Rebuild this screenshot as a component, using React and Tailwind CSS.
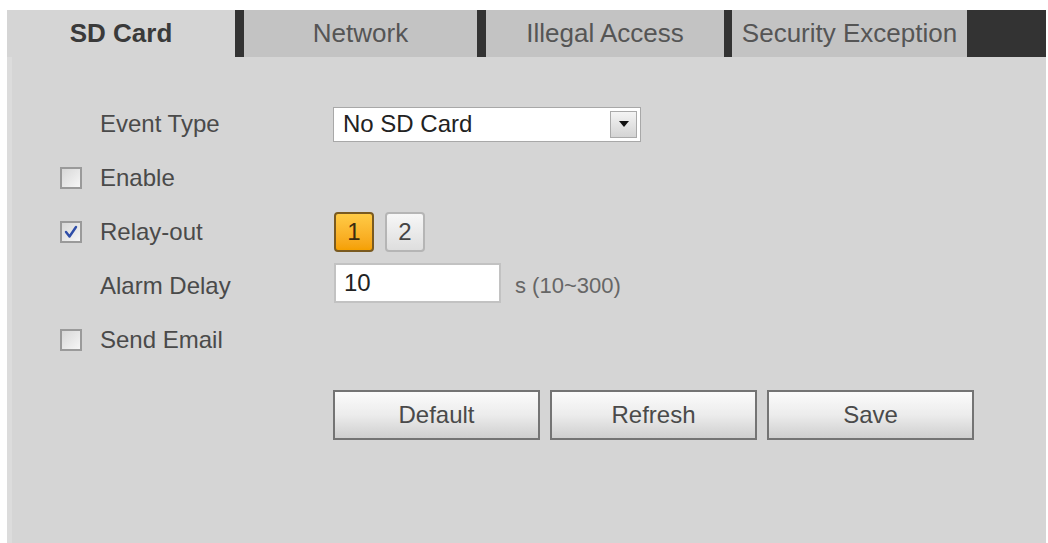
const tabs = [
  { name: 'SD Card', width: 'w-[228px]', active: true },
  { name: 'Network', width: 'w-[233px]' },
  { name: 'Illegal Access', width: 'w-[238px]' },
  { name: 'Security Exception', width: 'w-[235px]' },
];

const font = { fontFamily: '"Liberation Sans", Arial, sans-serif' };

const Checkbox = ({ checked }) => (
  <div className="w-[22px] h-[22px] border-2 border-[#9a9a9a] bg-gradient-to-br from-[#d8d8d8] to-[#f6f6f6] flex items-center justify-center">
    {checked && (
      <svg width="14" height="14" viewBox="0 0 14 14">
        <path d="M2 7 L5.5 11.5 L12 2" fill="none" stroke="#2f4ea8" strokeWidth="2.4" strokeLinecap="round" strokeLinejoin="round" />
      </svg>
    )}
  </div>
);

const Row = ({ check, label, children }) => (
  <div className="flex items-center h-[54px]">
    <div className="w-[93px] pl-[53px] flex items-center">
      {check !== undefined && <Checkbox checked={check} />}
    </div>
    <div className="w-[233px] text-[24px] text-[#4a4a4a]">{label}</div>
    <div className="flex items-center">{children}</div>
  </div>
);

export default function App() {
  return (
    <div className="min-h-screen bg-white pt-[10px] pl-[7px] pr-[2px]" style={font}>
      <div className="bg-[#d5d5d5] h-[533px] border-l-[5px] border-[#dcdcdc]">
        {/* tabs */}
        <div className="flex h-[47px] -ml-[5px]">
          {tabs.map((tab, i) => (
            <div key={tab.name} className="flex">
              {i > 0 && <div className={i === 3 ? 'w-[8px] bg-[#333]' : 'w-[9px] bg-[#333]'} />}
              <div
                className={`${tab.width} flex items-center justify-center text-[26px] whitespace-nowrap ${
                  tab.active ? 'bg-[#d5d5d5] font-bold text-[#3a3a3a]' : 'bg-[#c3c3c3] text-[#555]'
                }`}
              >
                {tab.name}
              </div>
            </div>
          ))}
          <div className="flex-1 bg-[#333]" />
        </div>

        {/* form */}
        <div className="pt-[40px] -ml-[5px]">
          <Row label="Event Type">
            <div className="w-[308px] h-[35px] bg-white border border-[#a8a8a8] flex items-center">
              <span className="flex-1 pl-[9px] text-[24px] text-[#222]">No SD Card</span>
              <div className="w-[27px] h-[27px] mr-[3px] border border-[#aaa] bg-gradient-to-b from-[#f4f4f4] to-[#d4d4d4] flex items-center justify-center">
                <svg width="10" height="6" viewBox="0 0 10 6">
                  <path d="M0 0 H10 L5 6 Z" fill="#111" />
                </svg>
              </div>
            </div>
          </Row>
          <Row check={false} label="Enable" />
          <Row check={true} label="Relay-out">
            <div className="flex gap-[11px] ml-[1px]">
              <div className="w-[40px] h-[40px] rounded-[4px] border-2 border-[#7a5a20] bg-gradient-to-b from-[#ffcb45] to-[#f5a000] flex items-center justify-center text-[24px] text-[#3a2a10]">
                1
              </div>
              <div className="w-[40px] h-[40px] rounded-[4px] border-2 border-[#b5b5b5] bg-gradient-to-b from-[#f7f7f7] to-[#dedede] flex items-center justify-center text-[24px] text-[#444]">
                2
              </div>
            </div>
          </Row>
          <Row label="Alarm Delay">
            <div className="w-[167px] h-[40px] ml-[1px] bg-white border-2 border-[#c2c2c2] flex items-center pl-[8px] text-[24px] text-[#222] -mt-[6px]">
              10
            </div>
            <span className="ml-[14px] text-[22px] text-[#666] -mt-[2px]">s (10~300)</span>
          </Row>
          <Row check={false} label="Send Email" />

          <div className="flex gap-[10px] pl-[326px] mt-[23px]">
            {['Default', 'Refresh', 'Save'].map((b) => (
              <button
                key={b}
                className="w-[207px] h-[50px] border-2 border-[#747474] bg-gradient-to-b from-[#fbfbfb] via-[#ececec] to-[#cfcfcf] text-[24px] text-[#4a4a4a]"
              >
                {b}
              </button>
            ))}
          </div>
        </div>
      </div>
    </div>
  );
}
